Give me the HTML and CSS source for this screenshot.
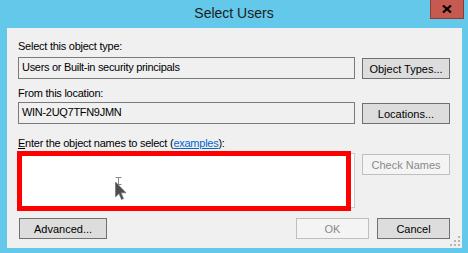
FILE: index.html
```html
<!DOCTYPE html>
<html>
<head>
<meta charset="utf-8">
<title>Select Users</title>
<link rel="stylesheet" href="styles.css">
</head>
<body>
<div class="window">
  <div class="titlebar">
    <div class="title">Select Users</div>
    <div class="close">
      <svg width="10" height="8" viewBox="0 0 10 8"><path d="M1 0.5 L9 7.5 M9 0.5 L1 7.5" stroke="#000" stroke-width="2.2" fill="none"/></svg>
    </div>
  </div>
  <div class="client">
    <div class="label lbl1">Select this object type:</div>
    <div class="row">
      <div class="textbox">Users or Built-in security principals</div>
      <button class="btn side">Object Types...</button>
    </div>
    <div class="label lbl2">From this location:</div>
    <div class="row">
      <div class="textbox">WIN-2UQ7TFN9JMN</div>
      <button class="btn side">Locations...</button>
    </div>
    <div class="label lbl3"><u>E</u>nter the object names to select (<a class="link">examples</a>):</div>
    <div class="row">
      <div class="namesbox">
        <div class="redmark"></div>
        <svg class="cursor" width="16" height="26" viewBox="0 0 16 26">
          <path d="M0.5 1.5 H6.5 M3.5 1.5 V8.5 M0.5 8.5 H6.5" stroke="#8a8a8a" stroke-width="1" fill="none"/>
          <path d="M0.5 6 L0.5 21 L4 17.5 L6.5 23.5 L8.5 22.6 L6 16.8 L11 16.8 Z" fill="#4d4d4d" stroke="#6a6a6a" stroke-width="0.6"/>
        </svg>
      </div>
      <button class="btn side disabled">Check Names</button>
    </div>
    <div class="bottom">
      <button class="btn adv">Advanced...</button>
      <div class="spacer"></div>
      <button class="btn small disabled">OK</button>
      <button class="btn small">Cancel</button>
    </div>
    <svg class="grip" width="10" height="10" viewBox="0 0 10 10">
      <rect x="8" y="0" width="2" height="2" fill="#b5b5b5"/>
      <rect x="4" y="4" width="2" height="2" fill="#b5b5b5"/>
      <rect x="8" y="4" width="2" height="2" fill="#b5b5b5"/>
      <rect x="0" y="8" width="2" height="2" fill="#b5b5b5"/>
      <rect x="4" y="8" width="2" height="2" fill="#b5b5b5"/>
      <rect x="8" y="8" width="2" height="2" fill="#b5b5b5"/>
    </svg>
  </div>
</div>
</body>
</html>
```

FILE: styles.css
```css
html, body {
  margin: 0;
  padding: 0;
}
body {
  font-family: "Liberation Sans", Arial, sans-serif;
  font-size: 11px;
  color: #000;
}
.window {
  width: 468px;
  height: 253px;
  background: #63c8e9;
  position: relative;
  overflow: hidden;
}
.titlebar {
  height: 28px;
  position: relative;
}
.title {
  text-align: center;
  font-size: 14px;
  line-height: 16px;
  padding-top: 5px;
  color: #1b1b1b;
}
.close {
  position: absolute;
  top: 0;
  right: 4px;
  width: 34px;
  height: 19px;
  box-sizing: border-box;
  background: #c75a50;
  border: 1px solid #8a3d36;
  border-top: none;
  display: flex;
  align-items: center;
  justify-content: center;
}
.client {
  position: relative;
  margin: 0 6px 0 7px;
  height: 220px;
  box-sizing: border-box;
  background: #f0f0f0;
  padding: 12px 12px 0 11px;
  display: flex;
  flex-direction: column;
}
.label {
  line-height: 13px;
  height: 13px;
  white-space: nowrap;
  letter-spacing: -0.25px;
}
.lbl1 { margin-bottom: 4px; }
.lbl2 { margin-top: 8px; margin-bottom: 2px; }
.lbl3 { margin-top: 13px; margin-bottom: 3px; }
.link {
  color: #0066cc;
  text-decoration: underline;
}
.row {
  display: flex;
  gap: 7px;
  align-items: flex-start;
}
.textbox {
  flex: 1;
  height: 22px;
  box-sizing: border-box;
  border: 1px solid #7a7a7a;
  background: #f0f0f0;
  padding: 0 3px;
  line-height: 18px;
  white-space: nowrap;
  letter-spacing: -0.3px;
}
.namesbox {
  flex: 1;
  height: 55px;
  box-sizing: border-box;
  border: 1px solid #c9c9c9;
  background: #fff;
  position: relative;
}
.redmark {
  position: absolute;
  left: -2px;
  top: -3px;
  width: 334px;
  height: 60px;
  box-sizing: border-box;
  border: 5px solid #ff0000;
}
.cursor {
  position: absolute;
  left: 96px;
  top: 22px;
}
.btn {
  font-family: "Liberation Sans", Arial, sans-serif;
  font-size: 11px;
  color: #000;
  background: #dddddd;
  border: 1px solid #707070;
  border-radius: 0;
  height: 21px;
  padding: 0;
  margin: 0;
  box-sizing: border-box;
  line-height: 18px;
  text-align: center;
}
.btn.side {
  width: 88px;
  margin-top: 1px;
}
.btn.disabled {
  background: #f4f4f4;
  border-color: #bfbfbf;
  color: #8a8a8a;
}
.bottom {
  display: flex;
  margin-top: 10px;
  gap: 8px;
}
.spacer { flex: 1; }
.btn.adv {
  width: 88px;
  margin-left: 1px;
}
.btn.small {
  width: 73px;
}
.grip {
  position: absolute;
  right: 2px;
  bottom: 2px;
}
```
